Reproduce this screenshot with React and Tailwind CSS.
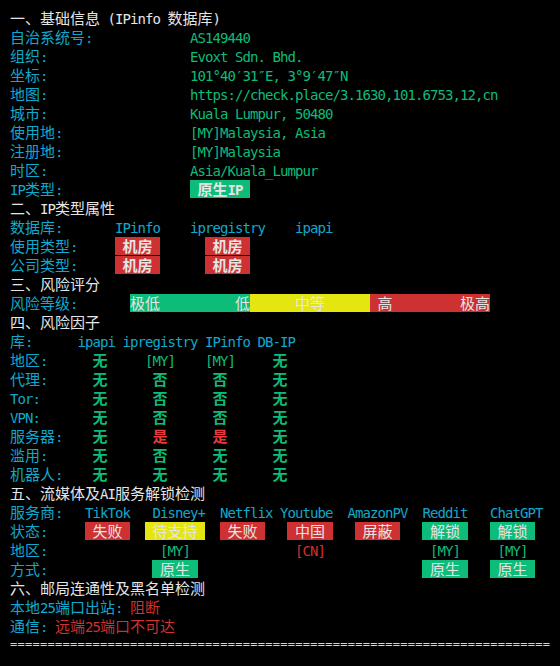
import React from 'react';

const CJK_SPLIT = /([\u2E80-\u9FFF\uF900-\uFAFF\uFF00-\uFFEF\u3000-\u303F]+)/;
const CJK_TEST = /^[\u2E80-\u9FFF\uF900-\uFAFF\uFF00-\uFFEF\u3000-\u303F]/;

// terminal cell = 7.5px, CJK glyph = 2 cells
function T({ s }) {
  return s
    .split(CJK_SPLIT)
    .filter(Boolean)
    .map((part, i) =>
      CJK_TEST.test(part) ? (
        <span key={i} className="font-['Noto_Sans_CJK_SC',sans-serif] text-[15px]">
          {part}
        </span>
      ) : (
        <span key={i} className="font-['DejaVu_Sans_Mono',monospace] text-[14px] tracking-[-0.93px]">
          {part}
        </span>
      )
    );
}

const Row = ({ children }) => (
  <div className="flex items-baseline h-[19px] leading-[19px] whitespace-pre">{children}</div>
);

const Head = ({ s }) => (
  <Row>
    <span className="text-[#e5e5e5]">
      <T s={s} />
    </span>
  </Row>
);

const Label = ({ s, w }) => (
  <span className={`text-[#11a8cd] ${w}`}>
    <T s={s} />
  </span>
);

const badgeColors = {
  green: 'bg-[#0dbc79]',
  red: 'bg-[#cd3131]',
  yellow: 'bg-[#e5e510]',
};

function Badge({ s, color, bold }) {
  return (
    <span
      className={`inline-block h-[18px] leading-[18px] px-[7.5px] text-[#e5e5e5] ${badgeColors[color]} ${
        bold ? 'font-bold' : ''
      }`}
    >
      <T s={s} />
    </span>
  );
}

const basic = [
  ['自治系统号:', 'AS149440'],
  ['组织:', 'Evoxt Sdn. Bhd.'],
  ['坐标:', '101°40′31″E, 3°9′47″N'],
  ['地图:', 'https://check.place/3.1630,101.6753,12,cn'],
  ['城市:', 'Kuala Lumpur, 50480'],
  ['使用地:', '[MY]Malaysia, Asia'],
  ['注册地:', '[MY]Malaysia'],
  ['时区:', 'Asia/Kuala_Lumpur'],
];

const factors = [
  ['地区:', ['无', '[MY]', '[MY]', '无']],
  ['代理:', ['无', '否', '否', '无']],
  ['Tor:', ['无', '否', '否', '无']],
  ['VPN:', ['无', '否', '否', '无']],
  ['服务器:', ['无', '是', '是', '无']],
  ['滥用:', ['无', '否', '无', '无']],
  ['机器人:', ['无', '无', '无', '无']],
];
const factorWidths = ['w-[45px]', 'w-[75px]', 'w-[45px]', 'w-[75px]'];

function FactorCell({ v, w }) {
  let cls = 'text-[#0dbc79] font-bold';
  if (v === '是') cls = 'text-[#e83a3a] font-bold';
  if (v.startsWith('[')) cls = 'text-[#0dbc79]';
  return (
    <span className={`${w} text-center ${cls}`}>
      <T s={v} />
    </span>
  );
}

const status = [
  ['失败', 'red'],
  ['待支持', 'yellow'],
  ['失败', 'red'],
  ['中国', 'red'],
  ['屏蔽', 'red'],
  ['解锁', 'green'],
  ['解锁', 'green'],
];
const region = ['', '[MY]', '', '[CN]', '', '[MY]', '[MY]'];
const method = ['', '原生', '', '', '', '原生', '原生'];

const Cell = ({ children }) => <span className="w-[67.5px] text-center">{children}</span>;

export default function App() {
  return (
    <div className="w-[560px] min-h-[666px] bg-black pt-[8px] pl-[10px] text-[#e5e5e5]">
      <Head s="一、基础信息 (IPinfo 数据库)" />
      {basic.map(([k, v]) => (
        <Row key={k}>
          <Label s={k} w="w-[180px]" />
          <span className="text-[#0dbc79]">
            <T s={v} />
          </span>
        </Row>
      ))}
      <Row>
        <Label s="IP类型:" w="w-[180px]" />
        <Badge s="原生IP" color="green" bold />
      </Row>

      <Head s="二、IP类型属性" />
      <Row>
        <span className="text-[#11a8cd]">
          <T s="数据库:       IPinfo    ipregistry    ipapi" />
        </span>
      </Row>
      {['使用类型:', '公司类型:'].map((k) => (
        <Row key={k}>
          <Label s={k} w="w-[82.5px]" />
          <span className="w-[90px] text-center">
            <Badge s="机房" color="red" bold />
          </span>
          <span className="w-[90px] text-center">
            <Badge s="机房" color="red" bold />
          </span>
        </Row>
      ))}

      <Head s="三、风险评分" />
      <Row>
        <Label s="风险等级:" w="w-[120px]" />
        <div className="flex w-[360px] h-[18px] leading-[18px] self-center text-[#e5e5e5]">
          <div className="w-[120px] flex justify-between bg-[#0dbc79]">
            <span><T s="极低" /></span>
            <span><T s="低" /></span>
          </div>
          <div className="w-[120px] flex justify-center bg-[#e5e510]">
            <span><T s="中等" /></span>
          </div>
          <div className="w-[120px] flex justify-between pl-[7.5px] bg-[#cd3131]">
            <span><T s="高" /></span>
            <span><T s="极高" /></span>
          </div>
        </div>
      </Row>

      <Head s="四、风险因子" />
      <Row>
        <span className="text-[#11a8cd]">
          <T s="库:      ipapi ipregistry IPinfo DB-IP" />
        </span>
      </Row>
      {factors.map(([k, vals]) => (
        <Row key={k}>
          <Label s={k} w="w-[67.5px]" />
          {vals.map((v, i) => (
            <FactorCell key={i} v={v} w={factorWidths[i]} />
          ))}
        </Row>
      ))}

      <Head s="五、流媒体及AI服务解锁检测" />
      <Row>
        <span className="text-[#11a8cd]">
          <T s="服务商:   TikTok   Disney+  Netflix Youtube  AmazonPV  Reddit   ChatGPT" />
        </span>
      </Row>
      <Row>
        <Label s="状态:" w="w-[63.75px]" />
        {status.map(([s, c], i) => (
          <Cell key={i}>
            <Badge s={s} color={c} />
          </Cell>
        ))}
      </Row>
      <Row>
        <Label s="地区:" w="w-[63.75px]" />
        {region.map((r, i) => (
          <Cell key={i}>
            <span className={r === '[CN]' ? 'text-[#cd3131]' : 'text-[#0dbc79]'}>
              <T s={r} />
            </span>
          </Cell>
        ))}
      </Row>
      <Row>
        <Label s="方式:" w="w-[63.75px]" />
        {method.map((m, i) => (
          <Cell key={i}>{m && <Badge s={m} color="green" />}</Cell>
        ))}
      </Row>

      <Head s="六、邮局连通性及黑名单检测" />
      <Row>
        <span className="text-[#11a8cd]">
          <T s="本地25端口出站: " />
        </span>
        <span className="text-[#cd3131]">
          <T s="阻断" />
        </span>
      </Row>
      <Row>
        <span className="text-[#11a8cd]">
          <T s="通信: " />
        </span>
        <span className="text-[#cd3131]">
          <T s="远端25端口不可达" />
        </span>
      </Row>
      <Row>
        <span className="text-[#d4d4d4] font-['DejaVu_Sans_Mono',monospace] text-[12px] tracking-[0.28px]">
          {'='.repeat(72)}
        </span>
      </Row>
    </div>
  );
}
